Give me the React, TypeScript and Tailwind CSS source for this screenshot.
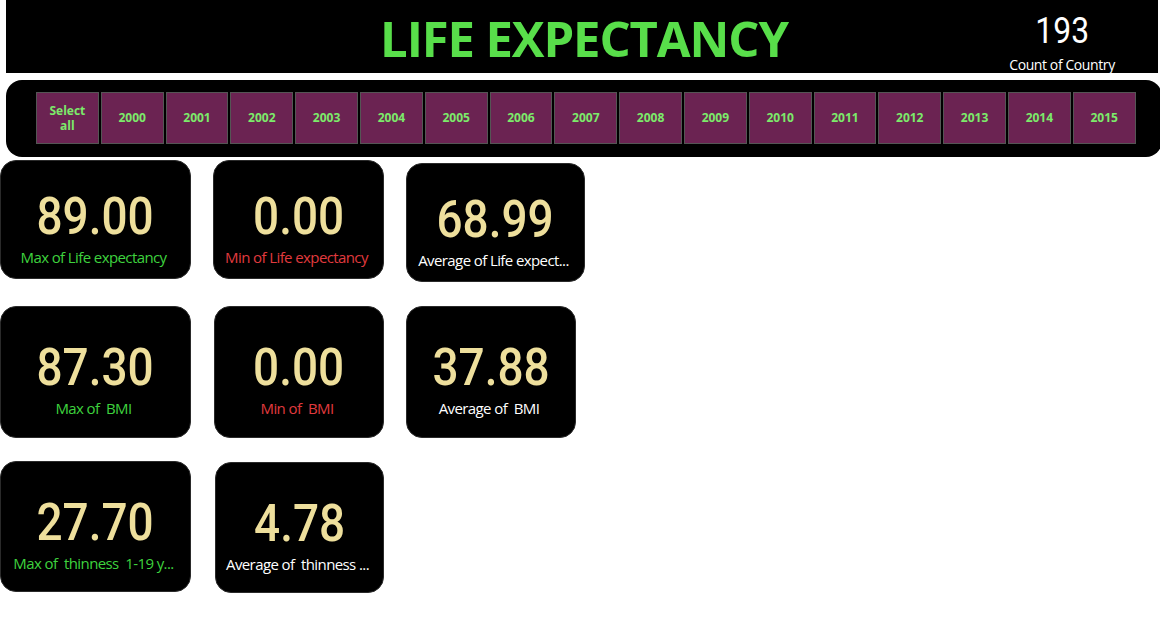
import React from "react";

const years = ["2000","2001","2002","2003","2004","2005","2006","2007","2008","2009","2010","2011","2012","2013","2014","2015"];

type CardProps = { value: string; label: string; color: string; w: string; h: string; extra?: string; tall?: boolean };

function Card({ value, label, color, w, h, extra = "", tall = false }: CardProps) {
  return (
    <div className={`${w} ${h} ${extra} ${tall ? "pb-[2px]" : ""} shrink-0 bg-black rounded-[16px] border border-[#2a2a2a] flex flex-col items-center justify-center`}>
      <div className="text-[#EEDF9C] text-[51px] leading-[60px] font-medium font-['Roboto',sans-serif] scale-x-[0.9] mt-[15px]">{value}</div>
      <div className={`${color} text-[15px] leading-[21px] font-['Open_Sans',sans-serif] tracking-[-0.6px] whitespace-pre -translate-x-[2px]`}>{label}</div>
    </div>
  );
}

export default function App() {
  return (
    <div className="w-[1160px] h-[625px] bg-white overflow-hidden relative font-['Open_Sans',sans-serif]">
      <div className="ml-[6px] mr-[2px] h-[73px] bg-black flex items-center relative overflow-hidden">
        <div className="flex-1 flex justify-center pl-[4px]">
          <span className="text-[#58DE4A] font-bold text-[49px] leading-none tracking-[-1.1px] font-['Open_Sans',sans-serif] mt-[4px]">LIFE EXPECTANCY</span>
        </div>
        <div className="absolute right-[36px] top-[13px] w-[120px] flex flex-col items-center">
          <div className="text-white text-[37px] leading-[36px] font-['Roboto',sans-serif] scale-x-[0.86]">193</div>
          <div className="text-white text-[14px] leading-[16px] mt-[8px] tracking-[-0.4px] whitespace-nowrap">Count of Country</div>
        </div>
      </div>
      <div className="ml-[6px] mt-[7px] w-[1156px] h-[77px] bg-black rounded-[16px] pl-[30px] pt-[12px] flex gap-[2px]">
        <div className="w-[62.8px] h-[52px] bg-[#6B2352] border border-[#555] flex items-center justify-center text-center text-[#7CEB6A] font-bold text-[12px] leading-[15px]">Select<br/>all</div>
        {years.map((y) => (
          <div key={y} className="w-[62.8px] h-[52px] bg-[#6B2352] border border-[#555] flex items-center justify-center text-[#7CEB6A] font-bold text-[12px]">{y}</div>
        ))}
      </div>
      <div className="flex items-start mt-[3px]">
        <Card value="89.00" label="Max of Life expectancy" color="text-[#3ED23E]" w="w-[191px]" h="h-[119px]" />
        <Card value="0.00" label="Min of Life expectancy" color="text-[#E03A3E]" w="w-[171px]" h="h-[119px]" extra="ml-[22px]" />
        <Card value="68.99" label="Average of Life expect..." color="text-white" w="w-[179px]" h="h-[119px]" extra="ml-[22px] mt-[3px]" />
      </div>
      <div className="flex items-start mt-[24px]">
        <Card tall value="87.30" label="Max of  BMI" color="text-[#3ED23E]" w="w-[191px]" h="h-[132px]" />
        <Card tall value="0.00" label="Min of  BMI" color="text-[#E03A3E]" w="w-[170px]" h="h-[132px]" extra="ml-[23px]" />
        <Card tall value="37.88" label="Average of  BMI" color="text-white" w="w-[170px]" h="h-[132px]" extra="ml-[22px]" />
      </div>
      <div className="flex items-start mt-[23px]">
        <Card tall value="27.70" label="Max of  thinness  1-19 y..." color="text-[#3ED23E]" w="w-[191px]" h="h-[131px]" />
        <Card tall value="4.78" label="Average of  thinness ..." color="text-white" w="w-[169px]" h="h-[131px]" extra="ml-[24px] mt-[1px]" />
      </div>
    </div>
  );
}
